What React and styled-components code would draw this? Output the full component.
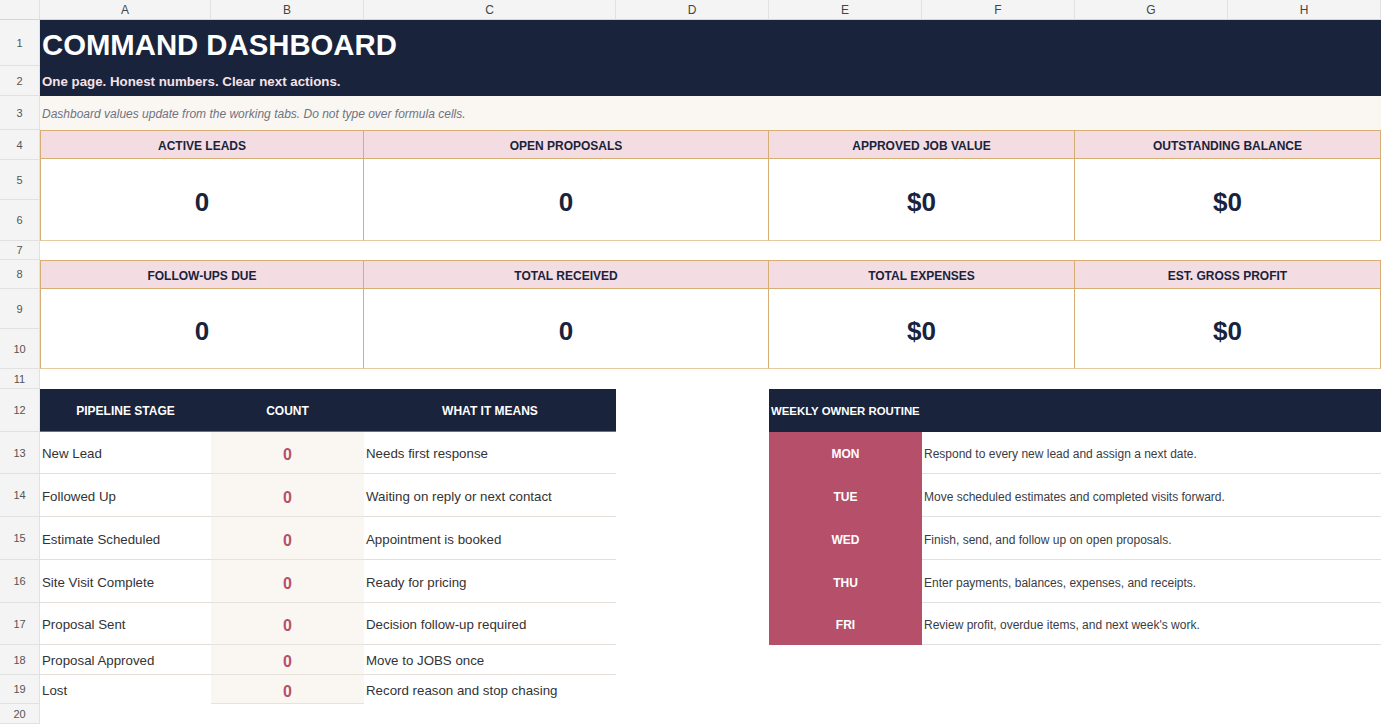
import React from "react";
import styled, { createGlobalStyle, css } from "styled-components";

const GlobalStyle = createGlobalStyle`
  html, body {
    margin: 0;
    padding: 0;
    background: #ffffff;
    font-family: "Liberation Sans", Arial, sans-serif;
  }
`;

const NAVY = "#19233c";
const ROSE = "#b5506b";
const CREAM = "#faf7f2";
const TAN = "#d6ae74";
const TAN_LIGHT = "#e4cc9f";
const GRID = "#e1e1e1";

// column A..H widths and row 1..20 heights, taken from the sheet
const COL_WIDTHS = [171, 153, 252, 153, 153, 153, 153, 153];
const ROW_HEIGHTS = [46, 30, 34, 30, 40, 41, 19, 29, 40, 40, 20, 43, 42, 43, 43, 43, 42, 30, 29, 20];
const LETTERS = ["A", "B", "C", "D", "E", "F", "G", "H"];

// put a cell at sheet row / column (1 based, A = 1)
const place = css`
  grid-row: ${(p) => p.$row + 1} / span ${(p) => p.$rows || 1};
  grid-column: ${(p) => p.$col + 1} / span ${(p) => p.$cols || 1};
`;

const Sheet = styled.div`
  display: grid;
  width: 1381px;
  grid-template-columns: 40px ${COL_WIDTHS.map((w) => `${w}px`).join(" ")};
  grid-template-rows: 20px ${ROW_HEIGHTS.map((h) => `${h}px`).join(" ")};
`;

const Corner = styled.div`
  grid-row: 1;
  grid-column: 1;
  background: #f4f4f4;
  border-right: 1px solid ${GRID};
  border-bottom: 1px solid #d5d5d5;
`;

const ColHead = styled.div`
  grid-row: 1;
  grid-column: ${(p) => p.$col + 1};
  display: flex;
  align-items: center;
  justify-content: center;
  background: #f4f4f4;
  border-right: 1px solid ${GRID};
  border-bottom: 1px solid #d5d5d5;
  color: #444;
  font-size: 12px;
`;

const RowHead = styled.div`
  grid-row: ${(p) => p.$row + 1};
  grid-column: 1;
  display: flex;
  align-items: center;
  justify-content: center;
  background: #f4f4f4;
  border-right: 1px solid ${GRID};
  border-bottom: 1px solid ${GRID};
  color: #555;
  font-size: 11px;
`;

const TitleCell = styled.div`
  ${place};
  display: flex;
  align-items: center;
  padding: 4px 2px 0;
  background: ${NAVY};
  color: #ffffff;
  font-size: 29.3px;
  font-weight: 700;
`;

const SubtitleCell = styled.div`
  ${place};
  display: flex;
  align-items: center;
  padding: 0 2px;
  background: ${NAVY};
  color: #f4e2e8;
  font-size: 13.3px;
  font-weight: 700;
`;

const NoteCell = styled.div`
  ${place};
  display: flex;
  align-items: center;
  padding: 2px 2px 0;
  background: ${CREAM};
  color: #707282;
  font-size: 12px;
  font-style: italic;
`;

const CardStrip = styled.div`
  ${place};
  display: grid;
  grid-template-columns: 324px 405px 306px 306px;
`;

const Card = styled.div`
  display: flex;
  flex-direction: column;
  border-top: 1px solid ${TAN};
  border-right: 1px solid ${TAN};
  border-bottom: 1px solid ${TAN_LIGHT};

  &:first-child {
    border-left: 1px solid ${TAN};
  }
`;

const CardLabel = styled.div`
  height: 28px;
  display: flex;
  align-items: center;
  justify-content: center;
  padding-top: 2px;
  box-sizing: border-box;
  background: #f3dde3;
  border-bottom: 1px solid ${TAN};
  color: ${NAVY};
  font-size: 12px;
  font-weight: 700;
`;

const CardValue = styled.div`
  flex: 1;
  display: flex;
  align-items: center;
  justify-content: center;
  padding-top: 5px;
  color: ${NAVY};
  font-size: 26px;
  font-weight: 700;
`;

const PipeHead = styled.div`
  ${place};
  display: flex;
  align-items: center;
  justify-content: center;
  padding-top: 2px;
  background: ${NAVY};
  border-bottom: 1px solid ${ROSE};
  color: #ffffff;
  font-size: 12px;
  font-weight: 700;
`;

const PipeCell = styled.div`
  ${place};
  display: flex;
  align-items: center;
  padding: 2px 2px 0;
  border-bottom: ${(p) => (p.$open ? "none" : "1px solid #e4ddd8")};
  color: #333;
  font-size: 13.3px;
`;

const CountCell = styled.div`
  ${place};
  display: flex;
  align-items: center;
  justify-content: center;
  padding-top: 5px;
  background: ${CREAM};
  border-bottom: 1px solid #e8e2dc;
  color: ${ROSE};
  font-size: 16px;
  font-weight: 700;
`;

const RoutineHead = styled.div`
  ${place};
  display: flex;
  align-items: center;
  padding: 1px 2px 0;
  background: ${NAVY};
  color: #ffffff;
  font-size: 11.4px;
  font-weight: 700;
`;

const DayCell = styled.div`
  ${place};
  display: flex;
  align-items: center;
  justify-content: center;
  padding-top: 2px;
  background: #b54f6a;
  color: #ffffff;
  font-size: 12px;
  font-weight: 700;
`;

const TaskCell = styled.div`
  ${place};
  display: flex;
  align-items: center;
  padding: 3px 2px 0;
  border-bottom: 1px solid #e0e0e0;
  color: #3b3b45;
  font-size: 12px;
`;

const topCards = [
  ["ACTIVE LEADS", "0"],
  ["OPEN PROPOSALS", "0"],
  ["APPROVED JOB VALUE", "$0"],
  ["OUTSTANDING BALANCE", "$0"],
];

const bottomCards = [
  ["FOLLOW-UPS DUE", "0"],
  ["TOTAL RECEIVED", "0"],
  ["TOTAL EXPENSES", "$0"],
  ["EST. GROSS PROFIT", "$0"],
];

const pipeline = [
  ["New Lead", "Needs first response"],
  ["Followed Up", "Waiting on reply or next contact"],
  ["Estimate Scheduled", "Appointment is booked"],
  ["Site Visit Complete", "Ready for pricing"],
  ["Proposal Sent", "Decision follow-up required"],
  ["Proposal Approved", "Move to JOBS once"],
  ["Lost", "Record reason and stop chasing"],
];

const routine = [
  ["MON", "Respond to every new lead and assign a next date."],
  ["TUE", "Move scheduled estimates and completed visits forward."],
  ["WED", "Finish, send, and follow up on open proposals."],
  ["THU", "Enter payments, balances, expenses, and receipts."],
  ["FRI", "Review profit, overdue items, and next week's work."],
];

const CardRow = ({ row, cards }) => (
  <CardStrip $row={row} $rows={3} $col={1} $cols={8}>
    {cards.map(([label, value]) => (
      <Card key={label}>
        <CardLabel>{label}</CardLabel>
        <CardValue>{value}</CardValue>
      </Card>
    ))}
  </CardStrip>
);

export default function App() {
  return (
    <>
      <GlobalStyle />
      <Sheet>
        <Corner />
        {LETTERS.map((l, i) => (
          <ColHead key={l} $col={i + 1}>{l}</ColHead>
        ))}
        {ROW_HEIGHTS.map((_, i) => (
          <RowHead key={i} $row={i + 1}>{i + 1}</RowHead>
        ))}

        <TitleCell $row={1} $col={1} $cols={8}>COMMAND DASHBOARD</TitleCell>
        <SubtitleCell $row={2} $col={1} $cols={8}>
          One page. Honest numbers. Clear next actions.
        </SubtitleCell>
        <NoteCell $row={3} $col={1} $cols={8}>
          Dashboard values update from the working tabs. Do not type over formula cells.
        </NoteCell>

        <CardRow row={4} cards={topCards} />
        <CardRow row={8} cards={bottomCards} />

        {/* pipeline table */}
        <PipeHead $row={12} $col={1}>PIPELINE STAGE</PipeHead>
        <PipeHead $row={12} $col={2}>COUNT</PipeHead>
        <PipeHead $row={12} $col={3}>WHAT IT MEANS</PipeHead>
        {pipeline.map(([stage, means], i) => {
          const row = 13 + i;
          const last = i === pipeline.length - 1;
          return (
            <React.Fragment key={stage}>
              <PipeCell $row={row} $col={1} $open={last}>{stage}</PipeCell>
              <CountCell $row={row} $col={2}>0</CountCell>
              <PipeCell $row={row} $col={3} $open={last}>{means}</PipeCell>
            </React.Fragment>
          );
        })}

        {/* weekly routine */}
        <RoutineHead $row={12} $col={5} $cols={4}>WEEKLY OWNER ROUTINE</RoutineHead>
        {routine.map(([day, task], i) => (
          <React.Fragment key={day}>
            <DayCell $row={13 + i} $col={5}>{day}</DayCell>
            <TaskCell $row={13 + i} $col={6} $cols={3}>{task}</TaskCell>
          </React.Fragment>
        ))}
      </Sheet>
    </>
  );
}
